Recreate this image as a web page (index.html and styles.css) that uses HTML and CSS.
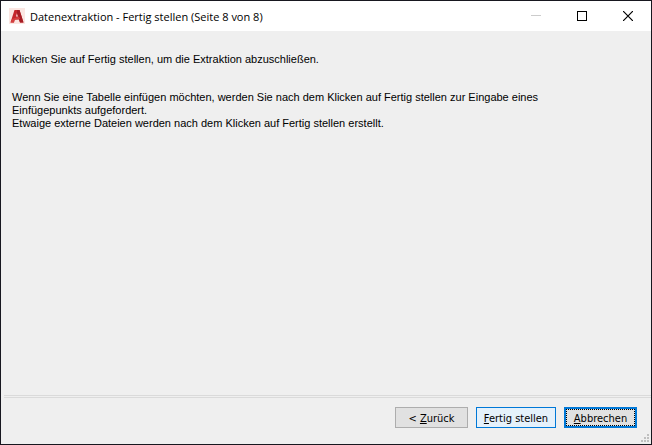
FILE: index.html
```html
<!DOCTYPE html>
<html lang="de">
<head>
    <meta charset="UTF-8">
    <meta name="viewport" content="width=device-width, initial-scale=1.0">
    <title>Datenextraktion - Fertig stellen (Seite 8 von 8)</title>
    <link rel="stylesheet" href="styles.css">
</head>
<body>

    <form class="dialog">
        <header class="titlebar">
            <svg class="logo" width="16" height="16" viewBox="0 0 16 16">
                <rect width="16" height="16" fill="#fbe6e2"/>
                <path d="M1.5 14.5 L5.5 2 H10.5 L14.5 14.5 H11 L10 11.5 H6 L5 14.5 Z M7 8.5 H9 L8 5 Z" fill="#c5262c" fill-rule="evenodd"/>
                <path d="M10.5 2 L14.5 14.5 H11 L8 5 V2 Z" fill="#a51d24"/>
                <path d="M1.5 14.5 L3 11 L10 8.5 L11 11 L5 12 V14.5 Z" fill="#d43f3f"/>
            </svg>
            <h1>Datenextraktion - Fertig stellen (Seite 8 von 8)</h1>
            <div class="window-buttons">
                <button type="button" aria-label="Minimieren" disabled>
                    <svg width="10" height="10" viewBox="0 0 10 10"><path d="M0 4.5H10" stroke="#cccccc"/></svg>
                </button>
                <button type="button" aria-label="Maximieren">
                    <svg width="10" height="10" viewBox="0 0 10 10"><rect x="0.5" y="0.5" width="9" height="9" fill="none" stroke="#000"/></svg>
                </button>
                <button type="button" aria-label="Schließen">
                    <svg width="10" height="10" viewBox="0 0 10 10"><path d="M0 0L10 10M10 0L0 10" stroke="#000" stroke-width="1.2"/></svg>
                </button>
            </div>
        </header>

        <main class="content">
            <p class="intro">Klicken Sie auf Fertig stellen, um die Extraktion abzuschließen.</p>
            <p>Wenn Sie eine Tabelle einfügen möchten, werden Sie nach dem Klicken auf Fertig stellen zur Eingabe eines Einfügepunkts aufgefordert.</p>
            <p>Etwaige externe Dateien werden nach dem Klicken auf Fertig stellen erstellt.</p>
        </main>

        <footer class="footer">
            <button type="button" class="btn">&lt; <u>Z</u>urück</button>
            <button type="submit" class="btn btn-hover"><u>F</u>ertig stellen</button>
            <button type="button" class="btn btn-focus"><u>A</u>bbrechen</button>
            <svg class="grip" width="8" height="8" viewBox="0 0 8 8" fill="#bfbfbf">
                <path d="M6 0h2v2h-2zM3 3h2v2h-2zM6 3h2v2h-2zM0 6h2v2h-2zM3 6h2v2h-2zM6 6h2v2h-2z"/>
            </svg>
        </footer>
    </form>

</body>
</html>
```

FILE: styles.css
```css
* {
    box-sizing: border-box;
}
body {
    margin: 0;
    font-family: "Liberation Sans", Arial, sans-serif;
    font-size: 11px;
    color: #000;
}
.dialog {
    display: flex;
    flex-direction: column;
    min-height: 100vh;
    border: 1px solid #17171f;
    background-color: #efefef;
}
.titlebar {
    display: flex;
    align-items: center;
    height: 30px;
    padding-left: 8px;
    background-color: #fff;
}
.titlebar h1 {
    flex: 1;
    margin: 0 0 0 5px;
    font-family: "Open Sans", sans-serif;
    font-size: 11px;
    font-weight: normal;
}
.window-buttons {
    display: flex;
    align-self: stretch;
}
.window-buttons button {
    display: flex;
    align-items: center;
    justify-content: center;
    width: 46px;
    padding: 0;
    border: none;
    background: none;
}
.content {
    flex: 1;
    max-width: 560px;
    padding: 22px 11px;
    line-height: 13px;
}
.content p {
    margin: 0;
}
.content .intro {
    margin-bottom: 25px;
}
.footer {
    position: relative;
    display: flex;
    justify-content: flex-end;
    gap: 8px;
    margin-left: 3px;
    padding: 9px 14px 16px;
    border-top: 3px double #dadada;
}
.btn {
    min-width: 73px;
    height: 21px;
    padding: 2px 6px 0;
    border: 1px solid #adadad;
    background-color: #e1e1e1;
    color: #000;
    font-family: "DejaVu Sans Condensed", "Open Sans", sans-serif;
    font-size: 11px;
    line-height: 17px;
}
.btn-hover {
    min-width: 80px;
    border-color: #0078d7;
    background-color: #e5f1fb;
}
.btn-focus {
    padding: 1px 0 0;
    border: 2px solid #0078d7;
    outline: 1px dotted #000;
    outline-offset: -3px;
}
.grip {
    position: absolute;
    right: 2px;
    bottom: 2px;
}
```
